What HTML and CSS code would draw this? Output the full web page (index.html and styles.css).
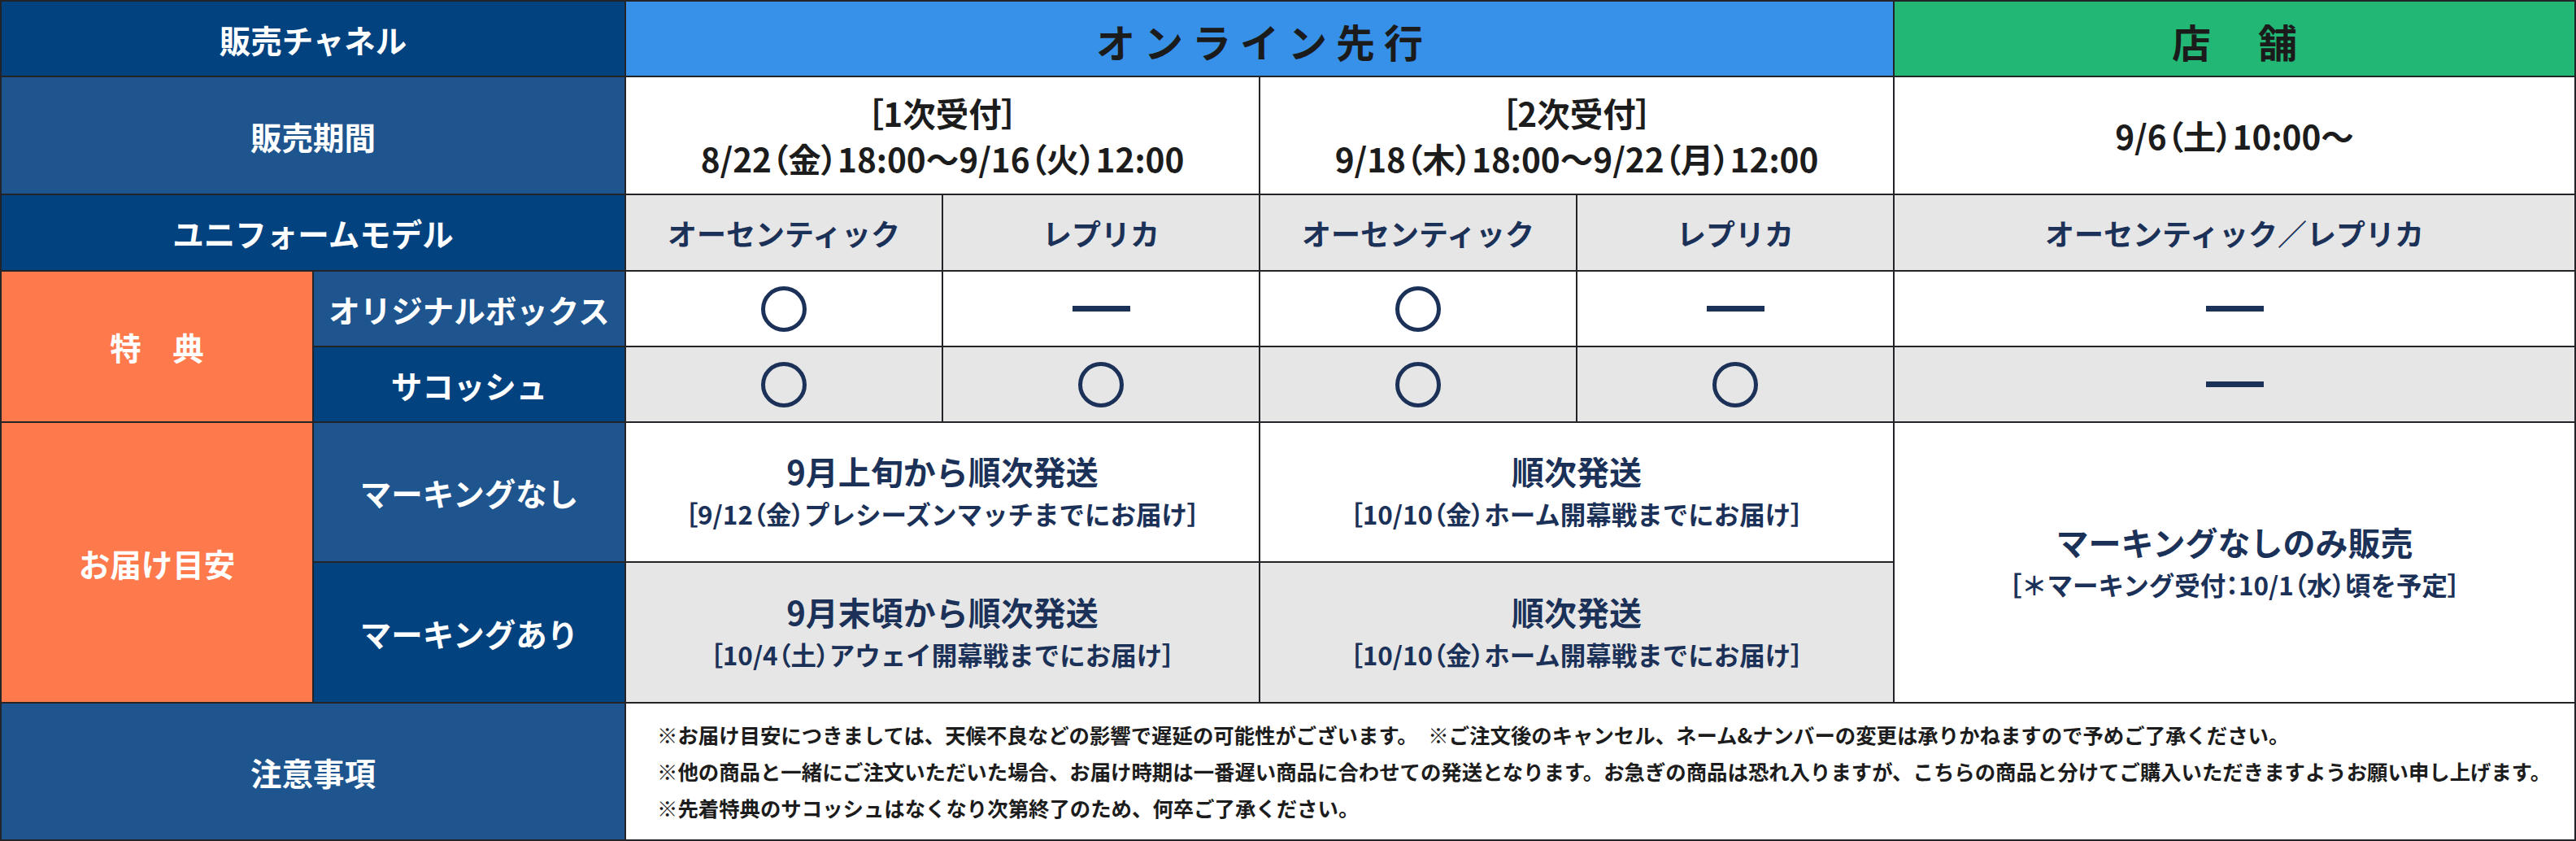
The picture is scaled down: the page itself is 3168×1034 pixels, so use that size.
FILE: index.html
```html
<!DOCTYPE html>
<html lang="ja">
<head>
<meta charset="utf-8">
<title>販売チャネル</title>
<link rel="stylesheet" href="styles.css">
</head>
<body>
<div class="table">
  <div class="cell lbl dark c2">販売チャネル</div>
  <div class="cell head online c4">オンライン先行</div>
  <div class="cell head store">店　舗</div>

  <div class="cell lbl mid c2">販売期間</div>
  <div class="cell white c2 date"><div><span class="p">［</span>1次受付<span class="p">］</span></div><div>8/22<span class="p">（</span>金<span class="p">）</span>18:00〜9/16<span class="p">（</span>火<span class="p">）</span>12:00</div></div>
  <div class="cell white c2 date"><div><span class="p">［</span>2次受付<span class="p">］</span></div><div>9/18<span class="p">（</span>木<span class="p">）</span>18:00〜9/22<span class="p">（</span>月<span class="p">）</span>12:00</div></div>
  <div class="cell white date"><div>9/6<span class="p">（</span>土<span class="p">）</span>10:00〜</div></div>

  <div class="cell lbl dark c2">ユニフォームモデル</div>
  <div class="cell gray model">オーセンティック</div>
  <div class="cell gray model">レプリカ</div>
  <div class="cell gray model">オーセンティック</div>
  <div class="cell gray model">レプリカ</div>
  <div class="cell gray model">オーセンティック／レプリカ</div>

  <div class="cell lbl orange r2">特　典</div>
  <div class="cell lbl mid">オリジナルボックス</div>
  <div class="cell white"><span class="circle"></span></div>
  <div class="cell white"><span class="dash"></span></div>
  <div class="cell white"><span class="circle"></span></div>
  <div class="cell white"><span class="dash"></span></div>
  <div class="cell white"><span class="dash"></span></div>

  <div class="cell lbl dark">サコッシュ</div>
  <div class="cell gray"><span class="circle"></span></div>
  <div class="cell gray"><span class="circle"></span></div>
  <div class="cell gray"><span class="circle"></span></div>
  <div class="cell gray"><span class="circle"></span></div>
  <div class="cell gray"><span class="dash"></span></div>

  <div class="cell lbl orange r2">お届け目安</div>
  <div class="cell lbl mid">マーキングなし</div>
  <div class="cell white c2 ship"><div class="big">9月上旬から順次発送</div><div class="small"><span class="p">［</span>9/12<span class="p">（</span>金<span class="p">）</span>プレシーズンマッチまでにお届け<span class="p">］</span></div></div>
  <div class="cell white c2 ship"><div class="big">順次発送</div><div class="small"><span class="p">［</span>10/10<span class="p">（</span>金<span class="p">）</span>ホーム開幕戦までにお届け<span class="p">］</span></div></div>
  <div class="cell white r2 ship"><div class="big">マーキングなしのみ販売</div><div class="small"><span class="p">［</span>＊マーキング受付<span class="p">：</span>10/1<span class="p">（</span>水<span class="p">）</span>頃を予定<span class="p">］</span></div></div>

  <div class="cell lbl dark">マーキングあり</div>
  <div class="cell gray c2 ship"><div class="big">9月末頃から順次発送</div><div class="small"><span class="p">［</span>10/4<span class="p">（</span>土<span class="p">）</span>アウェイ開幕戦までにお届け<span class="p">］</span></div></div>
  <div class="cell gray c2 ship"><div class="big">順次発送</div><div class="small"><span class="p">［</span>10/10<span class="p">（</span>金<span class="p">）</span>ホーム開幕戦までにお届け<span class="p">］</span></div></div>

  <div class="cell lbl mid c2">注意事項</div>
  <div class="cell white c5 notes">
    <p>※お届け目安につきましては、天候不良などの影響で遅延の可能性がございます。　※ご注文後のキャンセル、ネーム&amp;ナンバーの変更は承りかねますので予めご了承ください。</p>
    <p>※他の商品と一緒にご注文いただいた場合、お届け時期は一番遅い商品に合わせての発送となります。お急ぎの商品は恐れ入りますが、こちらの商品と分けてご購入いただきますようお願い申し上げます。</p>
    <p>※先着特典のサコッシュはなくなり次第終了のため、何卒ご了承ください。</p>
  </div>
</div>
</body>
</html>
```

FILE: styles.css
```css
html, body {
  margin: 0;
  padding: 0;
  background: #ffffff;
}

body {
  font-family: "Noto Sans CJK JP", "Noto Sans", sans-serif;
  font-weight: 700;
  width: 3168px;
  height: 1034px;
  overflow: hidden;
}

.table {
  display: grid;
  grid-template-columns: 382px 382px 388px 388px 388px 388px 836px;
  grid-template-rows: 91px 143px 92px 91px 91px 170px 171px 167px;
  gap: 2px;
  padding: 2px;
  background: #222428;
  width: 3168px;
  height: 1034px;
  box-sizing: border-box;
}

.cell {
  display: flex;
  flex-direction: column;
  align-items: center;
  justify-content: center;
  text-align: center;
  white-space: nowrap;
}

.c2 { grid-column: span 2; }
.c4 { grid-column: span 4; }
.c5 { grid-column: span 5; }
.r2 { grid-row: span 2; }

.p { font-feature-settings: "palt"; }

.lbl {
  color: #ffffff;
  font-size: 38.5px;
}
.dark { background: #01427f; }
.mid { background: #1e558f; }
.orange { background: #fe7a4d; }

.head {
  font-size: 48px;
  color: #1b1b1b;
  padding-top: 4px;
}
.online {
  background: #3791e9;
  letter-spacing: 11px;
  text-indent: 11px;
}
.store {
  background: #22b774;
  letter-spacing: 5px;
  text-indent: 5px;
}

.white { background: #ffffff; }
.gray { background: #e6e6e6; }

.date {
  font-size: 40.5px;
  line-height: 56px;
  color: #1c1c1c;
}

.model {
  font-size: 36px;
  color: #1b3158;
}

.circle {
  display: block;
  width: 56px;
  height: 56px;
  box-sizing: border-box;
  border: 5px solid #1b3158;
  border-radius: 50%;
}

.dash {
  display: block;
  width: 71px;
  height: 7px;
  background: #1b3158;
}

.ship {
  color: #1b3158;
}
.ship .big {
  font-size: 40px;
  line-height: 52px;
}
.ship .small {
  font-size: 31.5px;
  line-height: 52px;
}

.notes {
  align-items: flex-start;
  text-align: left;
  padding-left: 38px;
  color: #1c1c1c;
  font-size: 25.4px;
  line-height: 45px;
}
.notes p {
  margin: 0;
}
```
